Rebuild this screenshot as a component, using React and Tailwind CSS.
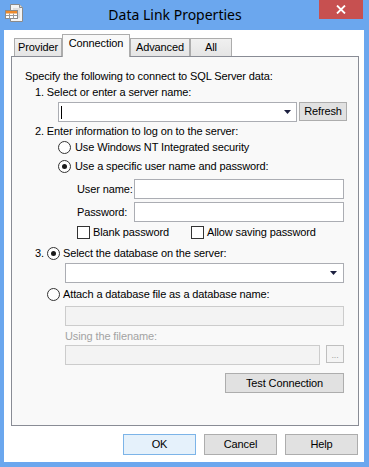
import React from "react";

const ui = { fontFamily: '"Liberation Sans", Arial, sans-serif' };

const Radio = ({ checked }) => (
  <span className="flex h-[13px] w-[13px] shrink-0 items-center justify-center rounded-full border border-[#333333] bg-white">
    {checked && <span className="h-[5px] w-[5px] rounded-full bg-[#1a1a1a]" />}
  </span>
);

const Check = () => <span className="h-[13px] w-[13px] shrink-0 border border-[#333333] bg-white" />;

const Arrow = () => (
  <svg width="7" height="4" viewBox="0 0 7 4" className="shrink-0">
    <path d="M0 0h7L3.5 4z" fill="#1c2040" />
  </svg>
);

const Btn = ({ children, className = "" }) => (
  <button
    type="button"
    className={`flex items-center justify-center border border-[#adadad] bg-[#e1e1e1] text-[11px] leading-[13px] tracking-[-0.12px] text-black ${className}`}
  >
    {children}
  </button>
);

const AppIcon = () => (
  <svg width="18" height="18" viewBox="0 0 18 18">
    <path d="M5.5 0.5h9l3 3v14h-12z" fill="#f4f4f4" stroke="#8a8a8a" />
    <path d="M14.5 0.5v3h3" fill="#dcdcdc" stroke="#8a8a8a" />
    <path d="M8 5h7M8 7h7M8 9h7M8 11h7M8 13h7" stroke="#c9c9c9" />
    <rect x="0.5" y="6.5" width="12" height="8" fill="#ffffff" stroke="#8a8a8a" />
    <rect x="1" y="7" width="11" height="2.5" fill="#ee8a2a" />
    <path d="M1 11.5h11M4.5 9.5v5M8.5 9.5v5" stroke="#9a9a9a" />
  </svg>
);

const Tab = ({ children, active, w }) =>
  active ? (
    <div
      className={`relative z-10 -mb-[1px] flex h-[23px] items-start justify-center border border-b-0 border-[#acacac] bg-[#f9f9f9] pt-[2px] text-[11px] leading-[13px] tracking-[-0.12px] text-black ${w}`}
    >
      {children}
    </div>
  ) : (
    <div
      className={`flex h-[18px] items-start justify-center border border-b-0 border-[#acacac] bg-gradient-to-b from-[#f0f0f0] to-[#e5e5e5] pt-[2px] text-[11px] leading-[13px] tracking-[-0.12px] text-black ${w}`}
    >
      {children}
    </div>
  );

const App = () => {
  return (
    <div className="flex h-[467px] w-[369px] flex-col bg-[#6ba7ee] pb-[5px] pl-[4px] pr-[5px]" style={ui}>
      <div className="relative flex h-[30px] shrink-0 items-start">
        <div className="ml-[1px] mt-[4px]">
          <AppIcon />
        </div>
        <div
          className="flex-1 pl-[8px] pt-[5px] text-center text-[14px] leading-[20px] text-black"
          style={{ fontFamily: '"Noto Sans", "Open Sans", sans-serif' }}
        >
          Data Link Properties
        </div>
        <div className="mr-[1px] flex h-[19px] w-[44px] items-center justify-center bg-[#c75050]">
          <svg width="10" height="9" viewBox="0 0 10 9">
            <path d="M1 0.5l8 8M9 0.5l-8 8" stroke="#ffffff" strokeWidth="1.8" />
          </svg>
        </div>
      </div>

      <div className="flex h-[432px] w-[360px] flex-col bg-white">
        <div className="flex items-end pl-[10px] pt-[4px]">
          <Tab w="w-[48px]">Provider</Tab>
          <Tab active w="w-[68px]">Connection</Tab>
          <Tab w="w-[60px]">Advanced</Tab>
          <Tab w="w-[42px]">All</Tab>
        </div>

        <div className="ml-[7px] flex h-[370px] w-[348px] flex-col border border-[#898c95] bg-[#f9f9f9] pl-[13px] pt-[13px] text-[11px] leading-[13px] tracking-[-0.12px] text-black">
          <div>Specify the following to connect to SQL Server data:</div>
          <div className="ml-[10px] mt-[3px]">1. Select or enter a server name:</div>
          <div className="ml-[33px] mt-[3px] flex items-start gap-[2px]">
            <div className="flex h-[20px] w-[239px] items-center justify-between border border-[#abadb3] bg-white pl-[2px] pr-[5px]">
              <span className="h-[13px] w-[1px] bg-black" />
              <Arrow />
            </div>
            <Btn className="h-[19px] w-[48px]">Refresh</Btn>
          </div>
          <div className="ml-[10px] mt-[3px]">2. Enter information to log on to the server:</div>
          <div className="ml-[33px] mt-[3px] flex h-[13px] items-center gap-[4px]">
            <Radio />
            <span>Use Windows NT Integrated security</span>
          </div>
          <div className="ml-[33px] mt-[6px] flex h-[13px] items-center gap-[4px]">
            <Radio checked />
            <span>Use a specific user name and password:</span>
          </div>
          <div className="ml-[52px] mt-[6px] flex items-center">
            <span className="w-[57px]">User name:</span>
            <div className="h-[20px] w-[210px] border border-[#abadb3] bg-white" />
          </div>
          <div className="ml-[52px] mt-[3px] flex items-center">
            <span className="w-[57px]">Password:</span>
            <div className="h-[20px] w-[210px] border border-[#abadb3] bg-white" />
          </div>
          <div className="ml-[52px] mt-[4px] flex h-[13px] items-center">
            <div className="flex w-[114px] items-center gap-[3px]">
              <Check />
              <span>Blank password</span>
            </div>
            <div className="flex items-center gap-[3px]">
              <Check />
              <span>Allow saving password</span>
            </div>
          </div>
          <div className="ml-[10px] mt-[8px] flex h-[13px] items-center">
            <span className="w-[12px]">3.</span>
            <Radio checked />
            <span className="ml-[3px]">Select the database on the server:</span>
          </div>
          <div className="ml-[40px] mt-[3px] flex h-[20px] w-[279px] items-center justify-end border border-[#abadb3] bg-white pr-[6px]">
            <Arrow />
          </div>
          <div className="ml-[22px] mt-[5px] flex h-[13px] items-center gap-[3px]">
            <Radio />
            <span>Attach a database file as a database name:</span>
          </div>
          <div className="ml-[40px] mt-[5px] h-[20px] w-[279px] border border-[#cccccc] bg-[#f3f3f3]" />
          <div className="ml-[40px] mt-[4px] text-[#a3a3a3]">Using the filename:</div>
          <div className="ml-[40px] mt-[2px] flex items-start">
            <div className="h-[20px] w-[255px] border border-[#cccccc] bg-[#f3f3f3]" />
            <div className="ml-[6px] flex h-[18px] w-[18px] items-end justify-center border border-[#bfbfbf] bg-[#f4f4f4] pb-[2px] text-[9px] leading-[9px] text-[#a0a0a0]">
              ...
            </div>
          </div>
          <Btn className="ml-[200px] mt-[8px] h-[20px] w-[119px]">Test Connection</Btn>
        </div>

        <div className="mt-[8px] flex justify-end gap-[8px] pr-[6px]">
          <Btn className="h-[21px] w-[73px] !border-[#7cb4e8] !bg-[#e5f1fb]">OK</Btn>
          <Btn className="h-[21px] w-[73px]">Cancel</Btn>
          <Btn className="h-[21px] w-[73px]">Help</Btn>
        </div>
      </div>
    </div>
  );
};

export default App;
